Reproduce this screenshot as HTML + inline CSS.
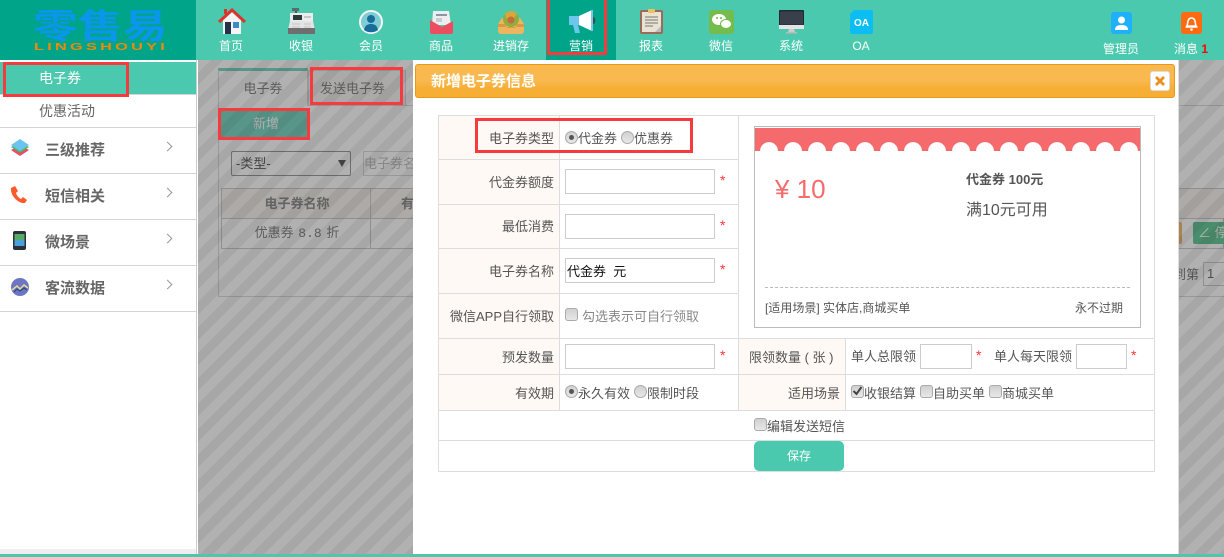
<!DOCTYPE html>
<html lang="zh"><head><meta charset="utf-8"><title>新增电子券信息</title>
<style>
html,body{margin:0;padding:0;width:1224px;height:557px;overflow:hidden;background:#fff;font-family:"Liberation Sans","Noto Sans CJK SC",sans-serif;font-size:13px;color:#555}
.a{position:absolute}
.t{position:absolute;white-space:nowrap;line-height:20px;height:20px}
.c{transform:translateX(-50%)}
.r{transform:translateX(-100%)}
.nav{color:#fff;font-size:12px}
.red{position:absolute;border:3px solid #f63a3d;box-sizing:border-box}
.hl{position:absolute;height:1px;background:#ddd}
.vl{position:absolute;width:1px;background:#ddd}
.sl{position:absolute;left:0;width:196px;height:1px;background:#d4d4d4}
.side{font-size:15px;font-weight:bold;color:#666}
.chev{position:absolute;width:6px;height:6px;border-top:1px solid #999;border-right:1px solid #999;transform:rotate(45deg)}
.lab{position:absolute;background:#fef9f4}
.in{position:absolute;box-sizing:border-box;border:1px solid #ccc;background:#fff;height:25px}
.st{position:absolute;color:#f33;font-size:14px;line-height:14px;width:8px;font-family:"Liberation Sans",sans-serif}
.rd{position:absolute;width:13px;height:13px;border-radius:50%;border:1px solid #aaa;box-sizing:border-box;background:linear-gradient(#d0d0d0,#e8e8e8)}
.rd.on::after{content:"";position:absolute;left:3px;top:3px;width:5px;height:5px;border-radius:50%;background:#555}
.cb{position:absolute;width:13px;height:13px;border-radius:3px;border:1px solid #aaa;box-sizing:border-box;background:linear-gradient(#d0d0d0,#e8e8e8)}
</style></head><body>

<!-- header -->
<div class="a" style="left:0;top:0;width:1224px;height:60px;background:#4bc9ae"></div>
<div class="a" style="left:0;top:0;width:196px;height:60px;background:#00a488"></div>
<div class="a" style="left:546px;top:0;width:70px;height:60px;background:#00a488"></div>
<div class="t" style="left:33px;top:5px;height:44px;line-height:44px;font-size:44px;font-weight:bold;color:#0a96ea;transform-origin:0 50%;transform:scale(1.02,.78)">零售易</div>
<div class="t" style="left:34px;top:38px;font-size:10px;font-weight:bold;letter-spacing:2px;color:#ee8a0a;transform-origin:0 50%;transform:scaleX(1.63)">LINGSHOUYI</div>

<!-- nav icons -->
<svg class="a" style="left:218px;top:8px" width="28" height="27" viewBox="0 0 28 27"><path d="M5 12L14 4l9 8v14H5z" fill="#f4f4f4"/><path d="M1 14L14 2l13 12" fill="none" stroke="#d9352b" stroke-width="3"/><rect x="6" y="1" width="3" height="5" fill="#d9352b"/><rect x="7" y="14" width="6" height="12" fill="#26324a"/><rect x="15" y="14" width="6" height="6" fill="#3b8cc4"/></svg>
<svg class="a" style="left:287px;top:7px" width="29" height="28" viewBox="0 0 29 28"><rect x="5" y="1" width="7" height="3" fill="#5e6b6b"/><rect x="8" y="4" width="2" height="3" fill="#555"/><rect x="3" y="6" width="23" height="9" fill="#ececec"/><rect x="6" y="8" width="9" height="5" fill="#2e3a3a"/><rect x="17" y="9" width="7" height="2" fill="#c8c8c8"/><path d="M3 14h23l2 9H1z" fill="#e4e4e4"/><path d="M5 17h8M5 20h8M17 17h7M17 20h7" stroke="#c4c4c4"/><rect x="1" y="21" width="27" height="6" fill="#6e6e6e"/></svg>
<svg class="a" style="left:359px;top:10px" width="24" height="24" viewBox="0 0 24 24"><circle cx="12" cy="12" r="11" fill="#7fccd4" stroke="#f2f6f6" stroke-width="2"/><circle cx="12" cy="9" r="4" fill="#176d99"/><path d="M5 20c1-5 4-6 7-6s6 1 7 6c-4 3-10 3-14 0z" fill="#176d99"/></svg>
<svg class="a" style="left:429px;top:9px" width="25" height="26" viewBox="0 0 25 26"><path d="M4 2h16l2 14H3z" fill="#eee"/><rect x="7" y="5" width="11" height="2" fill="#8a97a8"/><rect x="7" y="9" width="6" height="4" fill="#c7cdd6"/><path d="M1 11l12 7 11-6v11a2 2 0 0 1-2 2H3a2 2 0 0 1-2-2z" fill="#ec4d5f"/></svg>
<svg class="a" style="left:497px;top:8px" width="28" height="27" viewBox="0 0 28 27"><path d="M1 16l4-6h18l4 6v7a3 3 0 0 1-3 3H4a3 3 0 0 1-3-3z" fill="#eeb45e"/><circle cx="14" cy="11" r="8" fill="#8fae3f"/><path d="M8 6c4-4 9-4 12 0l-3 4H9z" fill="#d8a63a"/><circle cx="14" cy="12" r="3.5" fill="#c86a3c"/><path d="M1 16h7l2 4h8l2-4h7v3H1z" fill="#d99a45"/></svg>
<svg class="a" style="left:567px;top:9px" width="29" height="26" viewBox="0 0 29 26"><path d="M2 7h10v9H2z" fill="#6ec6ec"/><path d="M6 16h5l2 8H8z" fill="#6ec6ec"/><path d="M12 7l13-6v21l-13-6z" fill="#fff"/><rect x="24" y="1" width="2" height="21" fill="#7cc7e6"/><path d="M26 8c3 0 3 7 0 7z" fill="#3b4a50"/></svg>
<svg class="a" style="left:639px;top:8px" width="25" height="27" viewBox="0 0 25 27"><rect x="1" y="2" width="23" height="24" rx="2" fill="#9c6a58"/><rect x="3" y="4" width="19" height="20" fill="#e9e3d3"/><rect x="9" y="1" width="7" height="4" rx="1" fill="#f0c060"/><path d="M6 9h13M6 12h13M6 15h13M6 18h8" stroke="#777" stroke-width="1"/><path d="M16 24l6-6v6z" fill="#bbb"/></svg>
<svg class="a" style="left:709px;top:10px" width="25" height="24" viewBox="0 0 25 24"><rect width="25" height="24" rx="3" fill="#74bc4c"/><ellipse cx="10" cy="9.500" rx="7" ry="5.500" fill="#fff"/><ellipse cx="17" cy="14" rx="5.500" ry="4.500" fill="#fff" stroke="#74bc4c"/><circle cx="8" cy="8" r="1" fill="#74bc4c"/><circle cx="12" cy="8" r="1" fill="#74bc4c"/></svg>
<svg class="a" style="left:779px;top:10px" width="25" height="24" viewBox="0 0 25 24"><rect x="0" y="0" width="25" height="19" rx="1" fill="#1f2a33"/><rect x="1" y="1.500" width="23" height="13" fill="#3a3f4c"/><rect x="0" y="15" width="25" height="4" fill="#e4e4e4"/><path d="M10 19h5l1 3H9z" fill="#ccc"/><rect x="7" y="22" width="11" height="1.500" fill="#bbb"/></svg>
<svg class="a" style="left:850px;top:10px" width="23" height="24" viewBox="0 0 23 24"><path d="M4 0h17a2 2 0 0 1 2 2v20a2 2 0 0 1-2 2H2a2 2 0 0 1-2-2V4z" fill="#0bbdf2"/><text x="11.500" y="16" font-size="10" font-weight="bold" fill="#fff" text-anchor="middle" font-family="Liberation Sans">OA</text></svg>
<svg class="a" style="left:1111px;top:12px" width="21" height="22" viewBox="0 0 21 22"><rect width="21" height="22" rx="3" fill="#1fb0fb"/><circle cx="10.500" cy="8" r="3.500" fill="#fff"/><path d="M4 18c0-4 3-5 6.500-5s6.500 1 6.500 5z" fill="#fff"/></svg>
<svg class="a" style="left:1181px;top:12px" width="21" height="22" viewBox="0 0 21 22"><rect width="21" height="22" rx="3" fill="#ff6a10"/><path d="M6 14c1-2 0-8 4.500-8s3.500 6 4.500 8z" fill="none" stroke="#fff" stroke-width="1.600"/><path d="M4.500 15h12" stroke="#fff" stroke-width="1.500"/><circle cx="10.500" cy="17.500" r="1.300" fill="#fff"/></svg>

<div class="t nav c" style="left:231px;top:36px">首页</div>
<div class="t nav c" style="left:301px;top:36px">收银</div>
<div class="t nav c" style="left:371px;top:36px">会员</div>
<div class="t nav c" style="left:441px;top:36px">商品</div>
<div class="t nav c" style="left:511px;top:36px">进销存</div>
<div class="t nav c" style="left:581px;top:36px">营销</div>
<div class="t nav c" style="left:651px;top:36px">报表</div>
<div class="t nav c" style="left:721px;top:36px">微信</div>
<div class="t nav c" style="left:791px;top:36px">系统</div>
<div class="t nav c" style="left:861px;top:36px">OA</div>
<div class="t nav c" style="left:1121px;top:39px">管理员</div>
<div class="t nav" style="left:1174px;top:39px">消息 <span style="color:#f00;font-weight:bold">1</span></div>

<!-- sidebar -->
<div class="a" style="left:196px;top:60px;width:1px;height:494px;background:#ccc"></div>
<div class="a" style="left:0;top:62px;width:196px;height:32px;background:#4bc9ae"></div>
<div class="sl" style="top:94px"></div>
<div class="t" style="left:39px;top:68px;color:#fff;font-size:14px">电子券</div>
<div class="t" style="left:39px;top:101px;color:#666;font-size:14px">优惠活动</div>
<div class="sl" style="top:127px"></div>
<div class="sl" style="top:173px"></div>
<div class="sl" style="top:219px"></div>
<div class="sl" style="top:265px"></div>
<div class="sl" style="top:311px"></div>
<div class="a" style="left:0;top:549px;width:196px;height:5px;background:#eee"></div>
<div class="t side" style="left:45px;top:141px">三级推荐</div>
<div class="t side" style="left:45px;top:187px">短信相关</div>
<div class="t side" style="left:45px;top:233px">微场景</div>
<div class="t side" style="left:45px;top:279px">客流数据</div>
<div class="chev" style="left:164px;top:143px"></div>
<div class="chev" style="left:164px;top:189px"></div>
<div class="chev" style="left:164px;top:235px"></div>
<div class="chev" style="left:164px;top:281px"></div>
<svg class="a" style="left:10px;top:139px" width="20" height="19" viewBox="0 0 20 19"><path d="M1 11l9-5 9 5-9 6z" fill="#e8486a"/><path d="M1 8l9-5 9 5-9 6z" fill="#4dbb63"/><path d="M1 6l9-6 9 6-9 6z" fill="#6cc3f2"/></svg>
<svg class="a" style="left:10px;top:186px" width="18" height="18" viewBox="0 0 18 18"><path d="M1 2l4-2 3 5-2 2c1 3 3 5 5 6l2-2 4 3-2 3c-7 1-15-8-14-15z" fill="#ff5a2c"/></svg>
<svg class="a" style="left:13px;top:231px" width="13" height="19" viewBox="0 0 13 19"><rect width="13" height="19" rx="2" fill="#2a3138"/><rect x="1.500" y="3" width="10" height="12" fill="#58a868"/><rect x="1.500" y="9" width="10" height="6" fill="#4aa0d8"/></svg>
<svg class="a" style="left:11px;top:278px" width="18" height="18" viewBox="0 0 18 18"><circle cx="9" cy="9" r="9" fill="#6d76c2"/><path d="M1 12l5-4 3 3 4-4 4 3" fill="none" stroke="#e9d79a" stroke-width="1.500"/><path d="M3 14l3-3 3 2 4-3 3 2" fill="none" stroke="#2c4a78" stroke-width="1.200"/></svg>

<!-- background page under the overlay -->
<div class="a" style="left:198px;top:60px;width:1026px;height:494px;background:#fff"></div>
<div class="a" style="left:218px;top:105px;width:1010px;height:192px;box-sizing:border-box;border:1px solid #ccc"></div>
<div class="a" style="left:218px;top:68px;width:90px;height:38px;box-sizing:border-box;border:1px solid #ccc;border-top:3px solid #4bc9ae;border-bottom:0;background:#fff"></div>
<div class="a" style="left:308px;top:70px;width:98px;height:36px;box-sizing:border-box;border:1px solid #ccc;background:#f5f1ee"></div>
<div class="t c" style="left:263px;top:79px;color:#555">电子券</div>
<div class="t" style="left:320px;top:79px;color:#555">发送电子券</div>
<div class="a" style="left:221px;top:110px;width:86px;height:28px;background:#4bc9ae"></div>
<div class="t c" style="left:266px;top:114px;color:#fff">新增</div>
<div class="a" style="left:231px;top:151px;width:120px;height:25px;box-sizing:border-box;border:1px solid #777;border-radius:2px;background:#fff"></div>
<div class="t" style="left:236px;top:154px;color:#222">-类型-</div>
<div class="a" style="left:338px;top:160px;width:0;height:0;border:4px solid transparent;border-top:7px solid #222"></div>
<div class="a" style="left:363px;top:151px;width:60px;height:25px;box-sizing:border-box;border:1px solid #ccc;background:#fff"></div>
<div class="t" style="left:364px;top:154px;color:#aaa;width:49px;overflow:hidden">电子券名称</div>
<div class="a" style="left:221px;top:188px;width:1003px;height:61px;box-sizing:border-box;border:1px solid #bbb;background:#fff"></div>
<div class="a" style="left:222px;top:189px;width:1002px;height:29px;background:#f6f0ea"></div>
<div class="hl" style="left:221px;top:218px;width:1003px;background:#bbb"></div>
<div class="vl" style="left:370px;top:188px;height:61px;background:#bbb"></div>
<div class="t c" style="left:297px;top:194px;font-weight:bold;color:#666">电子券名称</div>
<div class="t" style="left:401px;top:194px;font-weight:bold;color:#666">有</div>
<div class="t c" style="left:297px;top:223px;color:#555;word-spacing:1px">优惠券 <span style="font-family:'Liberation Mono',monospace">8.8</span> 折</div>
<div class="a" style="left:1160px;top:222px;width:22px;height:22px;background:#f0a33c;border-radius:2px"></div>
<div class="a" style="left:1193px;top:222px;width:40px;height:22px;background:#2eb673;border-radius:2px"></div>
<div class="t" style="left:1198px;top:223px;color:#fff">∠ 停</div>
<div class="t" style="left:1173px;top:265px;color:#444">到第</div>
<div class="a" style="left:1203px;top:262px;width:30px;height:24px;box-sizing:border-box;border:1px solid #bbb;background:#fff"></div>
<div class="t" style="left:1207px;top:264px;color:#333">1</div>

<!-- overlay -->
<div class="a" style="left:198px;top:60px;width:1026px;height:494px;background:repeating-linear-gradient(135deg,rgba(100,100,100,.5) 0,rgba(100,100,100,.5) 9px,rgba(92,92,92,.54) 9px,rgba(92,92,92,.54) 18px)"></div>

<!-- red boxes -->
<div class="red" style="left:3px;top:62px;width:126px;height:35px"></div>
<div class="red" style="left:310px;top:67px;width:93px;height:38px"></div>
<div class="red" style="left:218px;top:108px;width:92px;height:32px"></div>
<div class="red" style="left:547px;top:-3px;width:60px;height:58px"></div>

<!-- modal -->
<div class="a" style="left:413px;top:60px;width:765px;height:494px;background:#fff;border-right:1px solid #ddd"></div>
<div class="a" style="left:415px;top:64px;width:760px;height:34px;box-sizing:border-box;border:1px solid #e8981a;border-radius:3px;background:linear-gradient(#f9b94f 0,#f9b94f 50%,#f7ae35 70%,#f7ae35 100%)"></div>
<div class="t" style="left:431px;top:72px;color:#fff;font-size:15px;font-weight:bold">新增电子券信息</div>
<div class="a" style="left:1150px;top:71px;width:20px;height:20px;box-sizing:border-box;background:#fff;border:1px solid #ddd;border-radius:3px"></div>
<svg class="a" style="left:1155px;top:76px" width="10" height="10" viewBox="0 0 10 10"><path d="M1 1l8 8M9 1l-8 8" stroke="#e8901a" stroke-width="2.800"/></svg>

<!-- form -->
<div class="lab" style="left:438px;top:115px;width:121px;height:223px"></div>
<div class="lab" style="left:438px;top:338px;width:121px;height:72px"></div>
<div class="lab" style="left:738px;top:338px;width:108px;height:72px"></div>
<div class="hl" style="left:438px;top:115px;width:717px"></div>
<div class="hl" style="left:438px;top:159px;width:301px"></div>
<div class="hl" style="left:438px;top:204px;width:301px"></div>
<div class="hl" style="left:438px;top:248px;width:301px"></div>
<div class="hl" style="left:438px;top:293px;width:301px"></div>
<div class="hl" style="left:438px;top:338px;width:717px"></div>
<div class="hl" style="left:438px;top:374px;width:717px"></div>
<div class="hl" style="left:438px;top:410px;width:717px"></div>
<div class="hl" style="left:438px;top:440px;width:717px"></div>
<div class="hl" style="left:438px;top:471px;width:717px"></div>
<div class="vl" style="left:438px;top:115px;height:357px"></div>
<div class="vl" style="left:1154px;top:115px;height:357px"></div>
<div class="vl" style="left:559px;top:115px;height:295px"></div>
<div class="vl" style="left:738px;top:115px;height:295px"></div>
<div class="vl" style="left:845px;top:338px;height:72px"></div>

<div class="t r" style="left:554px;top:129px">电子券类型</div>
<div class="t r" style="left:554px;top:173px">代金券额度</div>
<div class="t r" style="left:554px;top:217px">最低消费</div>
<div class="t r" style="left:554px;top:262px">电子券名称</div>
<div class="t r" style="left:554px;top:307px">微信APP自行领取</div>
<div class="t r" style="left:554px;top:348px">预发数量</div>
<div class="t r" style="left:554px;top:384px">有效期</div>

<div class="rd on" style="left:565px;top:131px"></div>
<div class="t" style="left:578px;top:129px">代金券</div>
<div class="rd" style="left:621px;top:131px"></div>
<div class="t" style="left:634px;top:129px">优惠券</div>
<div class="red" style="left:475px;top:118px;width:218px;height:35px"></div>

<div class="in" style="left:565px;top:169px;width:150px"></div>
<div class="in" style="left:565px;top:214px;width:150px"></div>
<div class="in" style="left:565px;top:258px;width:150px"></div>
<div class="t" style="left:567px;top:262px;color:#111">代金券&nbsp; 元</div>
<div class="st" style="left:720px;top:173px">*</div>
<div class="st" style="left:720px;top:218px">*</div>
<div class="st" style="left:720px;top:262px">*</div>
<div class="cb" style="left:565px;top:308px"></div>
<div class="t" style="left:582px;top:307px;color:#888">勾选表示可自行领取</div>

<div class="in" style="left:565px;top:344px;width:150px"></div>
<div class="st" style="left:720px;top:348px">*</div>
<div class="t" style="left:749px;top:348px">限领数量 ( 张 )</div>
<div class="t" style="left:851px;top:347px">单人总限领</div>
<div class="in" style="left:920px;top:344px;width:52px"></div>
<div class="st" style="left:976px;top:348px">*</div>
<div class="t" style="left:994px;top:347px">单人每天限领</div>
<div class="in" style="left:1076px;top:344px;width:51px"></div>
<div class="st" style="left:1131px;top:348px">*</div>

<div class="rd on" style="left:565px;top:385px"></div>
<div class="t" style="left:578px;top:384px">永久有效</div>
<div class="rd" style="left:634px;top:385px"></div>
<div class="t" style="left:647px;top:384px">限制时段</div>
<div class="t r" style="left:840px;top:384px">适用场景</div>
<div class="cb" style="left:851px;top:385px"></div>
<svg class="a" style="left:852px;top:386px" width="11" height="10" viewBox="0 0 10 10"><path d="M1 5l3 3 5-7" fill="none" stroke="#444" stroke-width="2"/></svg>
<div class="t" style="left:864px;top:384px">收银结算</div>
<div class="cb" style="left:920px;top:385px"></div>
<div class="t" style="left:933px;top:384px">自助买单</div>
<div class="cb" style="left:989px;top:385px"></div>
<div class="t" style="left:1002px;top:384px">商城买单</div>

<div class="cb" style="left:754px;top:418px"></div>
<div class="t" style="left:767px;top:417px">编辑发送短信</div>
<div class="a" style="left:754px;top:441px;width:90px;height:30px;background:#4bc9ae;border-radius:5px"></div>
<div class="t c" style="left:799px;top:446px;color:#fff;font-size:12px">保存</div>

<!-- coupon -->
<div class="a" style="left:754px;top:126px;width:387px;height:202px;box-sizing:border-box;border:1px solid #bbb;background:#fff"></div>
<div class="a" style="left:755px;top:128px;width:385px;height:23px;background:#f56a6c"></div>
<div class="a" style="left:755px;top:142px;width:385px;height:9px;background:radial-gradient(circle at 12px 9px,#fff 8.600px,rgba(255,255,255,0) 9.200px) 2px 0/24px 9px repeat-x"></div>
<div class="t" style="left:775px;top:179px;height:20px;line-height:20px;font-size:26px;color:#f56a6c">¥ 10</div>
<div class="t" style="left:966px;top:170px;font-weight:bold;color:#555">代金券 100元</div>
<div class="t" style="left:966px;top:201px;font-size:16px;color:#555">满10元可用</div>
<div class="a" style="left:765px;top:287px;width:365px;height:0;border-top:1px dashed #bbb"></div>
<div class="t" style="left:765px;top:298px;font-size:12px;color:#555">[适用场景] 实体店,商城买单</div>
<div class="t" style="left:1075px;top:298px;font-size:12px;color:#555">永不过期</div>

<!-- bottom bar -->
<div class="a" style="left:0;top:554px;width:1224px;height:3px;background:#4bc9ae"></div>
</body></html>
